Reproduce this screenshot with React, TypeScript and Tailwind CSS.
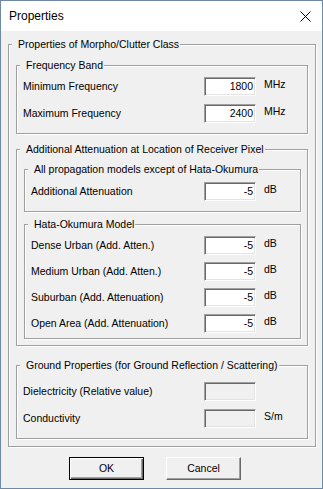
import React from 'react';

const font = { fontFamily: '"Liberation Sans", Arial, sans-serif' };

const Group = ({ title, className = '', children }: { title: string; className?: string; children: React.ReactNode }) => (
  <fieldset className={`m-0 min-w-0 border border-[#a0a0a0] p-0 shadow-[1px_1px_0_#fff,inset_1px_1px_0_#fff] ${className}`}>
    <legend className="ml-[3px] bg-[#f0f0f0] pl-[6px] pr-[1px] leading-[13px]">{title}</legend>
    {children}
  </fieldset>
);

const Field = ({ value, disabled }: { value?: string; disabled?: boolean }) => (
  <div
    className={`flex h-[19px] w-[52px] items-center justify-end border border-t-[#a0a0a0] border-l-[#a0a0a0] border-b-white border-r-white pr-[2px] shadow-[inset_1px_1px_0_#696969,inset_-1px_-1px_0_#e3e3e3] ${
      disabled ? 'bg-[#f0f0f0]' : 'bg-white'
    }`}
  >
    {value}
  </div>
);

const Row = ({ label, value, unit, labelWidth, disabled }: { label: string; value?: string; unit?: string; labelWidth: string; disabled?: boolean }) => (
  <div className="flex items-center">
    <span className={labelWidth}>{label}</span>
    <Field value={value} disabled={disabled} />
    {unit && <span className="ml-[8px] -mt-[3px]">{unit}</span>}
  </div>
);

export default function App() {
  return (
    <div className="h-[489px] w-[323px] text-[10.5px] text-black" style={font}>
      <div className="flex h-full flex-col border border-[#6f88a5] bg-[#f0f0f0]">
        {/* title bar */}
        <div className="flex h-[30px] items-center justify-between bg-white pl-[8px] pr-[10px]">
          <span className="text-[12px]">Properties</span>
          <svg width="11" height="11" viewBox="0 0 11 11" className="mr-[1px]">
            <path d="M0.5 0.5 L10.5 10.5 M10.5 0.5 L0.5 10.5" stroke="#000" strokeWidth="1" />
          </svg>
        </div>

        <div className="flex flex-1 flex-col pl-[7px] pr-[6px] pt-[7px]">
          <Group title="Properties of Morpho/Clutter Class" className="pb-[7px]">
            <div className="flex flex-col pl-[7px] pr-[7px]">
              <Group title="Frequency Band" className="mt-[8px]">
                <div className="flex flex-col gap-[8px] pb-[10px] pl-[6px] pt-[5px]">
                  <Row label="Minimum Frequency" value="1800" unit="MHz" labelWidth="w-[181px]" />
                  <Row label="Maximum Frequency" value="2400" unit="MHz" labelWidth="w-[181px]" />
                </div>
              </Group>

              <Group title="Additional Attenuation at Location of Receiver Pixel" className="mt-[9px]">
                <div className="flex flex-col pb-[6px] pl-[7px] pr-[6px]">
                  <Group title="All propagation models except of Hata-Okumura" className="mt-[7px]">
                    <div className="pb-[10px] pl-[6px] pt-[6px]">
                      <Row label="Additional Attenuation" value="-5" unit="dB" labelWidth="w-[173px]" />
                    </div>
                  </Group>
                  <Group title="Hata-Okumura Model" className="mt-[6px]">
                    <div className="flex flex-col gap-[7px] pb-[5px] pl-[6px] pt-[5px]">
                      <Row label="Dense Urban (Add. Atten.)" value="-5" unit="dB" labelWidth="w-[173px]" />
                      <Row label="Medium Urban (Add. Atten.)" value="-5" unit="dB" labelWidth="w-[173px]" />
                      <Row label="Suburban (Add. Attenuation)" value="-5" unit="dB" labelWidth="w-[173px]" />
                      <Row label="Open Area (Add. Attenuation)" value="-5" unit="dB" labelWidth="w-[173px]" />
                    </div>
                  </Group>
                </div>
              </Group>

              <Group title="Ground Properties (for Ground Reflection / Scattering)" className="mt-[13px]">
                <div className="flex flex-col gap-[8px] pb-[10px] pl-[6px] pt-[10px]">
                  <Row label="Dielectricity (Relative value)" labelWidth="w-[181px]" disabled />
                  <Row label="Conductivity" unit="S/m" labelWidth="w-[181px]" disabled />
                </div>
              </Group>
            </div>
          </Group>

          <div className="mt-[10px] flex gap-[22px] pl-[61px]">
            <button className="flex h-[23px] w-[75px] items-center justify-center border border-black bg-[#f0f0f0] shadow-[inset_1px_1px_0_#fff,inset_-1px_-1px_0_#696969,inset_-2px_-2px_0_#a0a0a0]">
              OK
            </button>
            <button className="flex h-[23px] w-[75px] items-center justify-center border border-t-white border-l-white border-b-[#696969] border-r-[#696969] bg-[#f0f0f0] shadow-[inset_-1px_-1px_0_#a0a0a0]">
              Cancel
            </button>
          </div>
        </div>
      </div>
    </div>
  );
}
